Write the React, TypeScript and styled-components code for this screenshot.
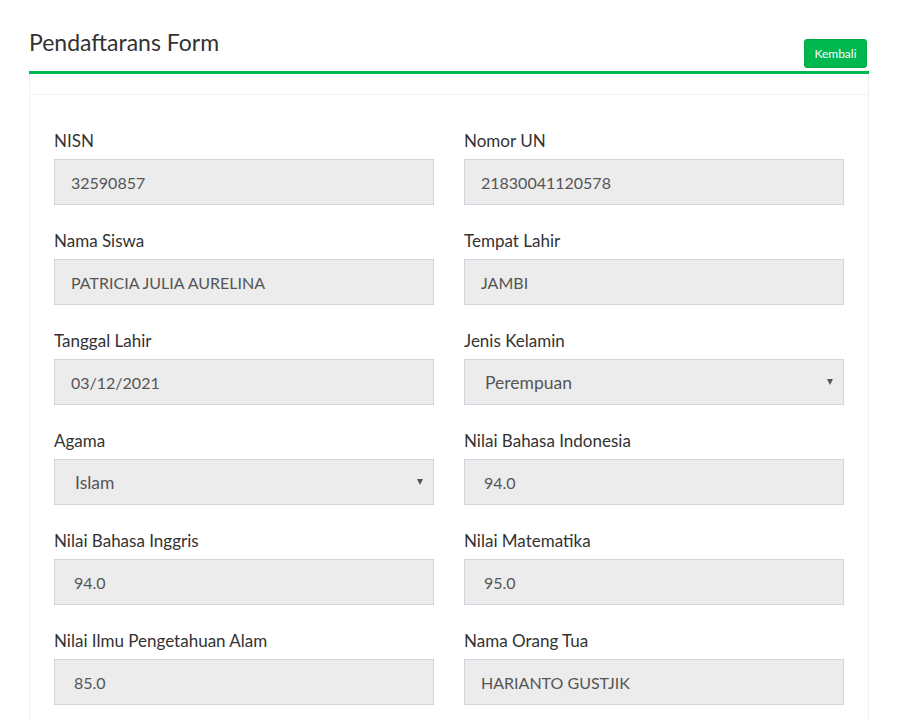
import React from "react";
import styled, { createGlobalStyle } from "styled-components";

const Global = createGlobalStyle`
  html, body { margin: 0; padding: 0; background: #ffffff; }
  body { font-family: Lato, "Liberation Sans", sans-serif; color: #333; }
  * { box-sizing: border-box; }
`;

const Page = styled.div`
  padding: 0 29px 0 29px;
`;

const Header = styled.div`
  display: flex;
  justify-content: space-between;
  align-items: flex-end;
  padding: 27px 2px 3px 0px;
  border-bottom: 3px solid #00b84f;
`;

const Title = styled.h1`
  margin: 0 0 11px 0;
  font-size: 23px;
  font-weight: 400;
  line-height: 30px;
  color: #333;
`;

const BackButton = styled.button`
  background: #00b84f;
  color: #fff;
  border: 1px solid #00a846;
  border-radius: 3px;
  font-family: inherit;
  font-size: 12px;
  height: 29px;
  width: 63px;
  padding: 0;
  cursor: pointer;
`;

const Card = styled.div`
  border: 1px solid #f2f2f2;
  border-top: none;
`;

const CardHead = styled.div`
  height: 21px;
  border-bottom: 1px solid #f1f1f1;
`;

const CardBody = styled.div`
  display: grid;
  grid-template-columns: 380px 380px;
  column-gap: 30px;
  row-gap: 24px;
  padding: 34px 25px 20px 24px;
`;

const Field = styled.div`
  display: flex;
  flex-direction: column;
  gap: 6px;
`;

const Label = styled.label`
  font-size: 17px;
  line-height: 24px;
  color: #333;
`;

const Input = styled.div<{ $pad: number; $size: number }>`
  height: 46px;
  background: #ececec;
  border: 1px solid #d3d3e0;
  display: flex;
  align-items: center;
  padding-left: ${(p) => p.$pad}px;
  padding-right: 10px;
  font-size: ${(p) => p.$size}px;
  color: #555;
  justify-content: space-between;
`;

const Arrow = styled.span`
  width: 0;
  height: 0;
  border-left: 3.5px solid transparent;
  border-right: 3.5px solid transparent;
  border-top: 6px solid #555;
`;

type F = { label: string; value: string; kind?: "text" | "num" | "select" };

const fields: F[] = [
  { label: "NISN", value: "32590857" },
  { label: "Nomor UN", value: "21830041120578" },
  { label: "Nama Siswa", value: "PATRICIA JULIA AURELINA" },
  { label: "Tempat Lahir", value: "JAMBI" },
  { label: "Tanggal Lahir", value: "03/12/2021" },
  { label: "Jenis Kelamin", value: "Perempuan", kind: "select" },
  { label: "Agama", value: "Islam", kind: "select" },
  { label: "Nilai Bahasa Indonesia", value: "94.0", kind: "num" },
  { label: "Nilai Bahasa Inggris", value: "94.0", kind: "num" },
  { label: "Nilai Matematika", value: "95.0", kind: "num" },
  { label: "Nilai Ilmu Pengetahuan Alam", value: "85.0", kind: "num" },
  { label: "Nama Orang Tua", value: "HARIANTO GUSTJIK" },
];

export default function App() {
  return (
    <>
      <Global />
      <Page>
        <Header>
          <Title>Pendaftarans Form</Title>
          <BackButton>Kembali</BackButton>
        </Header>
        <Card>
          <CardHead />
          <CardBody>
            {fields.map((f) => (
              <Field key={f.label}>
                <Label>{f.label}</Label>
                <Input
                  $pad={f.kind === "select" ? 20 : f.kind === "num" ? 19 : 16}
                  $size={f.kind === "select" ? 17.5 : 16}
                >
                  <span>{f.value}</span>
                  {f.kind === "select" && <Arrow />}
                </Input>
              </Field>
            ))}
          </CardBody>
        </Card>
      </Page>
    </>
  );
}
